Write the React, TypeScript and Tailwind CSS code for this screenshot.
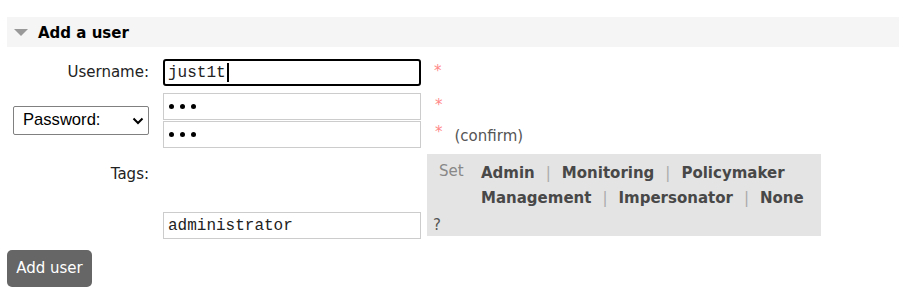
import React from "react";

const sans = { fontFamily: '"DejaVu Sans", Verdana, sans-serif' };

function Star() {
  return <span className="text-[15px] text-[#f88]">*</span>;
}

export default function App() {
  return (
    <div className="w-[899px] h-[300px] bg-white text-[15px] text-[#484848] overflow-hidden" style={sans}>
      <div className="pt-[17px] pl-[7px]">
        <div className="h-[30px] bg-[#f5f5f5] flex items-center pl-[7px]">
          <svg width="14" height="8" viewBox="0 0 14 8" className="mt-[2px]">
            <polygon points="0,0 14,0 7,7" fill="#999" />
          </svg>
          <span className="ml-[10px] mt-[3px] font-bold text-black">Add a user</span>
        </div>
      </div>

      {/* Username */}
      <div className="flex mt-[12px]">
        <div className="w-[149px] h-[27px] flex items-center justify-end text-[#222]">Username:</div>
        <div className="ml-[14px] w-[258px] h-[27px] border-2 border-black rounded-[3px] flex items-center pl-[3px]">
          <span className="text-[16px] text-[#222]" style={{ fontFamily: '"Liberation Mono", monospace' }}>just1t</span>
          <span className="w-[2px] h-[19px] bg-black ml-[1px]" />
        </div>
        <div className="ml-[13px] mt-[1px]"><Star /></div>
      </div>

      {/* Password */}
      <div className="flex mt-[7px]">
        <div className="w-[149px] flex items-center justify-end">
          <div className="w-[136px] h-[29px] border border-[#808080] rounded-[2px] flex items-center pl-[9px] pr-[4px] justify-between text-black" style={{ fontFamily: '"Liberation Sans", Arial, sans-serif' }}>
            <span className="text-[16.6px]">Password:</span>
            <svg width="12" height="8" viewBox="0 0 12 8"><path d="M1.5 1.5 L6 6 L10.5 1.5" stroke="#000" strokeWidth="2" fill="none" /></svg>
          </div>
        </div>
        <div className="ml-[14px] flex flex-col gap-[1px]">
          <div className="w-[258px] h-[27px] border border-[#ccc] flex items-center pl-[5px] gap-[6px]">
            <span className="w-[5px] h-[5px] rounded-full bg-black" />
            <span className="w-[5px] h-[5px] rounded-full bg-black" />
            <span className="w-[5px] h-[5px] rounded-full bg-black" />
          </div>
          <div className="w-[258px] h-[27px] border border-[#ccc] flex items-center pl-[5px] gap-[6px]">
            <span className="w-[5px] h-[5px] rounded-full bg-black" />
            <span className="w-[5px] h-[5px] rounded-full bg-black" />
            <span className="w-[5px] h-[5px] rounded-full bg-black" />
          </div>
        </div>
        <div className="ml-[14px] flex flex-col h-[55px]">
          <div className="h-[28px] pt-[1px]"><Star /></div>
          <div className="h-[27px] flex items-start">
            <Star />
            <span className="ml-[12px] mt-[4px] text-[#555]">(confirm)</span>
          </div>
        </div>
      </div>

      {/* Tags */}
      <div className="flex mt-[6px]">
        <div className="w-[149px] pt-[9px] text-right text-[#222]">Tags:</div>
        <div className="ml-[14px] w-[258px] pt-[58px]">
          <div className="w-[258px] h-[27px] border border-[#ccc] flex items-center pl-[4px]">
            <span className="text-[16px] text-[#222]" style={{ fontFamily: '"Liberation Mono", monospace' }}>administrator</span>
          </div>
        </div>
        <div className="ml-[6px] w-[394px] h-[82px] bg-[#e4e4e4] pl-[6px] pt-[6px] flex flex-col">
          <div className="flex">
            <span className="ml-[6px] w-[42px] text-[#888]">Set</span>
            <div className="flex flex-col font-bold text-[#484848] leading-[25px] mt-[1px]">
              <div>
                Admin<span className="font-normal text-[#aaa] mx-[11px]">|</span>Monitoring<span className="font-normal text-[#aaa] mx-[11px]">|</span>Policymaker
              </div>
              <div>
                Management<span className="font-normal text-[#aaa] mx-[11px]">|</span>Impersonator<span className="font-normal text-[#aaa] mx-[11px]">|</span>None
              </div>
            </div>
          </div>
          <span className="text-[#555] mt-auto">?</span>
        </div>
      </div>

      <div className="pl-[7px] mt-[11px]">
        <div className="w-[85px] h-[37px] bg-[#666] rounded-[5px] flex items-center justify-center text-white">Add user</div>
      </div>
    </div>
  );
}
